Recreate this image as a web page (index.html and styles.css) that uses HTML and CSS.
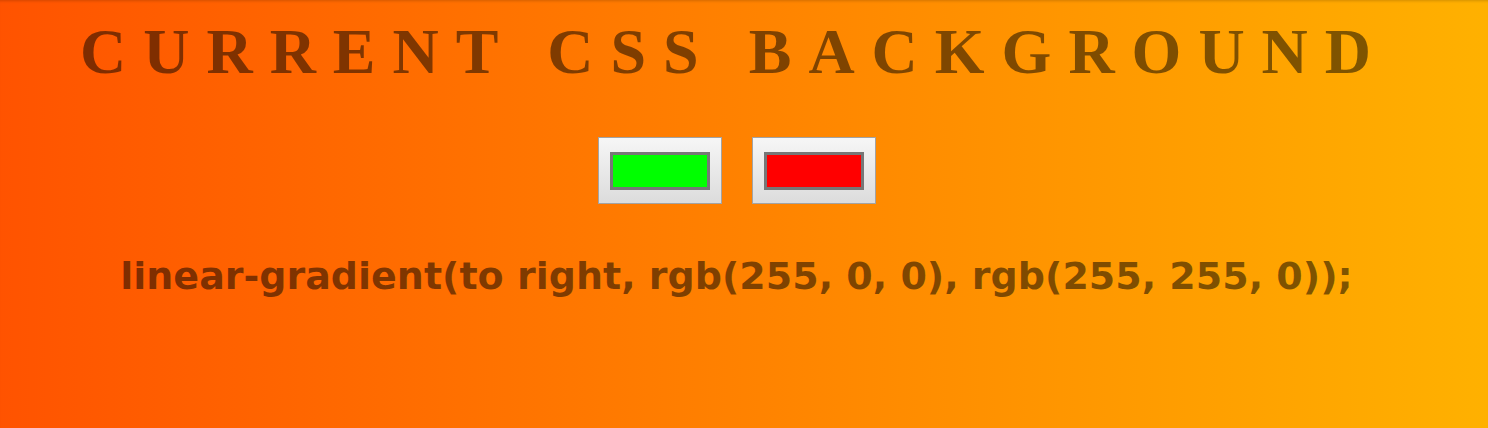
FILE: index.html
```html
<!DOCTYPE html>
<html lang="en">
<head>
<meta charset="utf-8">
<title>Background Generator</title>
<link rel="stylesheet" href="styles.css">
</head>
<body>
<main class="page">
  <h1 class="title">CURRENT CSS BACKGROUND</h1>
  <div class="pickers">
    <input class="picker" type="color" name="color1" value="#00ff00">
    <input class="picker" type="color" name="color2" value="#ff0000">
  </div>
  <h3 class="code">linear-gradient(to right, rgb(255, 0, 0), rgb(255, 255, 0));</h3>
</main>
</body>
</html>
```
FILE: styles.css
```css
html, body {
  margin: 0;
  padding: 0;
  height: 100%;
}

body {
  background: linear-gradient(to right, #ff5300, #ffb100);
  box-shadow: inset 0 3px 3px -2px rgba(0, 0, 0, 0.18);
}

.page {
  display: flex;
  flex-direction: column;
  align-items: center;
  padding: 20px 15px 0 0;
}

.title {
  margin: 0 5px 0 0;
  font-family: "Liberation Serif", "Times New Roman", serif;
  font-weight: bold;
  font-size: 64px;
  line-height: 64px;
  letter-spacing: 17px;
  color: rgba(0, 0, 0, 0.5);
  white-space: nowrap;
}

.pickers {
  display: flex;
  gap: 30px;
  margin-top: 53px;
}

.picker {
  -webkit-appearance: none;
  appearance: none;
  box-sizing: border-box;
  width: 124px;
  height: 67px;
  margin: 0;
  padding: 14px 11px 13px;
  border: 1px solid #a3a3a3;
  border-radius: 0;
  background: linear-gradient(to bottom, #f6f6f6, #dcdcdc);
  cursor: pointer;
}

.picker::-webkit-color-swatch-wrapper {
  padding: 0;
}

.picker::-webkit-color-swatch {
  border: 3px solid #777777;
  border-radius: 0;
}

.code {
  margin: 52px 0 0;
  font-family: "DejaVu Sans", Verdana, sans-serif;
  font-weight: bold;
  font-size: 38px;
  line-height: 40px;
  color: rgba(0, 0, 0, 0.5);
  white-space: nowrap;
}
```
